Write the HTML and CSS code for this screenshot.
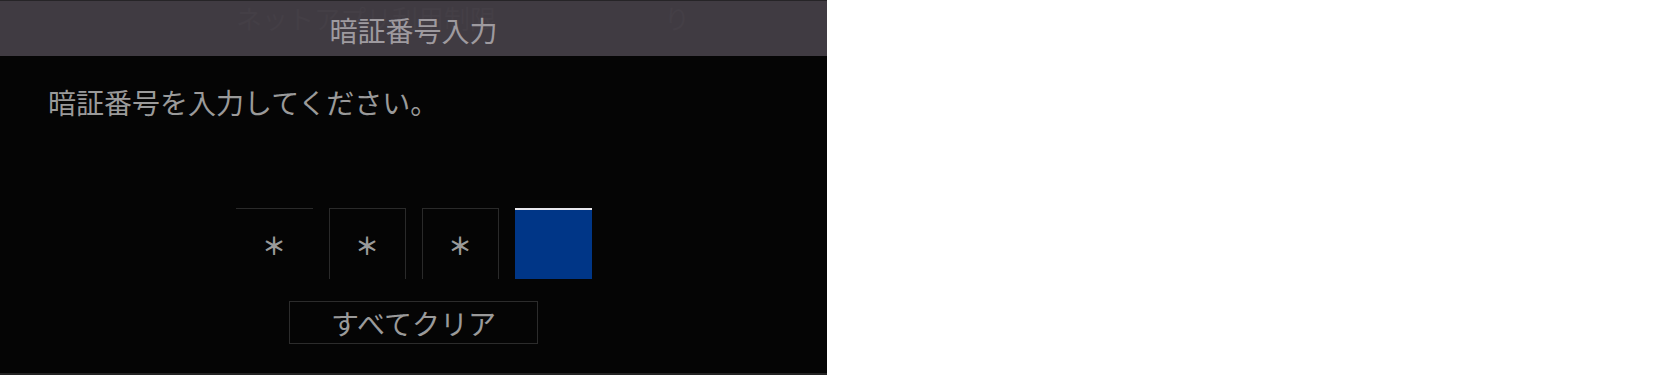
FILE: index.html
```html
<!DOCTYPE html>
<html lang="ja">
<head>
    <meta charset="UTF-8">
    <meta name="viewport" content="width=device-width, initial-scale=1.0">
    <title>暗証番号入力</title>
    <link rel="stylesheet" href="styles.css">
</head>
<body>
    <div class="panel">
        <div class="header">
            <span class="ghost">ネットアプリ利用制限</span>
            <span class="ghost ghost-right">り</span>
            <span class="title">暗証番号入力</span>
        </div>
        <div class="message">暗証番号を入力してください。</div>
        <div class="pins">
            <div class="pin first">＊</div>
            <div class="pin">＊</div>
            <div class="pin">＊</div>
            <div class="pin active"></div>
        </div>
        <div class="actions">
            <button class="clear">すべてクリア</button>
        </div>
    </div>
</body>
</html>
```

FILE: styles.css
```css
body {
    margin: 0;
    background-color: #ffffff;
    font-family: "Noto Sans CJK JP", "Noto Sans", sans-serif;
}
.panel {
    width: 827px;
    height: 373px;
    background: #050505;
    border-bottom: 2px solid #232323;
    color: #9a9a9a;
}
.header {
    position: relative;
    height: 55px;
    background: #403b42;
    border-top: 1px solid #262427;
    display: flex;
    justify-content: center;
    align-items: center;
}
.title {
    position: relative;
    font-size: 28px;
    line-height: 28px;
    color: #9e9a9f;
    margin-top: 3px;
}
.ghost {
    position: absolute;
    left: 236px;
    top: 4px;
    font-size: 26px;
    line-height: 26px;
    color: #443f46;
}
.ghost-right {
    left: 664px;
}
.message {
    padding: 32px 0 0 48px;
    font-size: 28px;
    line-height: 28px;
}
.pins {
    display: flex;
    justify-content: center;
    gap: 16px;
    margin-top: 92px;
}
.pin {
    box-sizing: border-box;
    width: 77px;
    height: 71px;
    border: 1px solid #2a2a2a;
    border-bottom: none;
    display: flex;
    justify-content: center;
    align-items: center;
    font-size: 24px;
    line-height: 24px;
    font-weight: bold;
    padding-top: 2px;
    color: #9a9a9a;
}
.pin.first {
    border-left: none;
    border-right: none;
}
.pin.active {
    background: #003687;
    border: none;
    border-top: 2px solid #e8e8ee;
}
.actions {
    display: flex;
    justify-content: center;
    margin-top: 22px;
}
.clear {
    width: 249px;
    height: 43px;
    background: #050505;
    border: 1px solid #2c2c2c;
    color: #9a9a9a;
    font-family: inherit;
    font-size: 28px;
    line-height: 28px;
    padding: 0;
}
```
